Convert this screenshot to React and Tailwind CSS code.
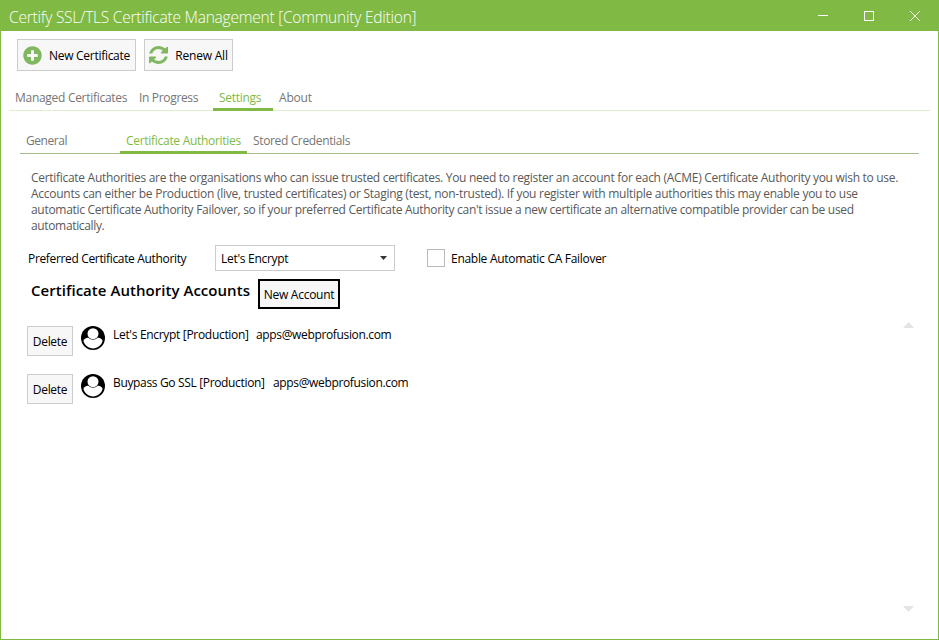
import React from "react";
import { FaPlusCircle } from "react-icons/fa";

function Btn({ className, children }) {
  return (
    <button className={"flex items-center justify-center whitespace-nowrap border border-[#cccccc] bg-[#f7f7f7] text-black " + className}>
      {children}
    </button>
  );
}

function UserIcon() {
  return (
    <svg className="ml-2 h-6 w-6 shrink-0" viewBox="0 0 24 24">
      <circle cx="12" cy="12" r="12" fill="#000" />
      <path d="M2.400 14.800C3.500 12.800 5.800 11.600 8 11.600h8c2.200 0 4.500 1.200 5.600 3.200C20.300 19.400 16.500 22.400 12 22.400S3.700 19.400 2.400 14.800z" fill="#fff" />
      <circle cx="12" cy="7.700" r="6.100" fill="#000" />
      <circle cx="12" cy="7.700" r="5.500" fill="#fff" />
    </svg>
  );
}

function Account({ name, nameClass }) {
  return (
    <div className="flex h-12 items-start pl-[26px]">
      <Btn className="h-[30px] w-[46px] pt-px tracking-[-0.3px]">Delete</Btn>
      <UserIcon />
      <span className={"mt-px ml-2 block leading-4 whitespace-nowrap " + nameClass}>{name}</span>
      <span className="mt-px block leading-4 tracking-[-0.35px] whitespace-nowrap">apps@webprofusion.com</span>
    </div>
  );
}

export default function App() {
  return (
    <div className="flex h-[640px] w-[939px] flex-col overflow-hidden border border-t-0 border-[#80ba45] bg-white font-['Open_Sans','Noto_Sans',sans-serif] text-[12px] leading-4 tracking-[-0.29px] text-black">
      <header className="flex h-[31px] shrink-0 items-center bg-[#80ba45] pl-2 text-white">
        <h1 className="w-[410px] pt-0.5 text-[15.500px] leading-5 font-light whitespace-nowrap tracking-[-0.22px]">Certify SSL/TLS Certificate Management [Community Edition]</h1>
        <svg className="ml-auto h-[31px] w-[138px]" viewBox="0 0 138 31" fill="none" stroke="#fff" shapeRendering="crispEdges">
          <path d="M18 15.500h10M64.500 11.500h9v9h-9z" />
          <path d="M110 11l10 10M120 11l-10 10" shapeRendering="auto" strokeWidth=".9" />
        </svg>
      </header>

      <div className="flex shrink-0 gap-2 pt-2 pl-4">
        <Btn className="h-8 w-[119px] gap-[7px]">
          <FaPlusCircle size={19} color="#80b760" className="shrink-0" />
          <span className="pt-0.5">New Certificate</span>
        </Btn>
        <Btn className="h-8 w-[89px] gap-[7px]">
          <svg className="h-[18px] w-[19px] shrink-0" viewBox="0 0 1536 1536" preserveAspectRatio="none" fill="#80b760">
            <path d="M1511 928q0 5-1 7-64 268-268 434.500T764 1536q-146 0-282.500-55T238 1324l-129 129q-19 19-45 19t-45-19-19-45V960q0-26 19-45t45-19h448q26 0 45 19t19 45-19 45l-137 137q71 66 161 102t187 36q134 0 250-65t186-179q11-17 53-117 8-23 30-23h192q13 0 22.500 9.500t9.500 22.500zm25-800v448q0 26-19 45t-45 19h-448q-26 0-45-19t-19-45 19-45l138-138Q969 256 768 256q-134 0-250 65T332 500q-11 17-53 117-8 23-30 23H50q-13 0-22.500-9.500T18 608v-7q65-268 270-434.500T768 0q146 0 284 55.500T1297 212l130-129q19-19 45-19t45 19 19 45z" />
          </svg>
          <span className="pt-0.5 tracking-[-0.2px]">Renew All</span>
        </Btn>
      </div>

      <nav className="mx-2 mt-[15px] flex h-[25px] shrink-0 border-b border-[#e0efcf] pt-1 leading-4 whitespace-nowrap text-[#767676]">
        <span className="w-[124px] pl-1.5">Managed Certificates</span>
        <span className="w-20 pl-1.5 tracking-[-0.33px]">In Progress</span>
        <span className="h-[21px] w-[60px] border-b-3 border-[#80ba45] pl-1.5 text-[#80ba45]">Settings</span>
        <span className="pl-1.5 tracking-[-0.2px]">About</span>
      </nav>

      <nav className="mx-[19px] mt-[18px] flex h-[25px] shrink-0 border-b border-[#a5bd8d] pt-1 leading-4 whitespace-nowrap text-[#767676]">
        <span className="w-[100px] pl-1.5 tracking-[-0.45px]">General</span>
        <span className="h-[21px] w-[127px] border-b-3 border-[#80ba45] pl-1.5 text-[#80ba45]">Certificate Authorities</span>
        <span className="pl-1.5 tracking-[-0.36px]">Stored Credentials</span>
      </nav>

      <p className="mt-4 ml-[30px] shrink-0 leading-4 whitespace-nowrap text-[#595959]">
        <span className="block w-fit tracking-[-0.295px]">Certificate Authorities are the organisations who can issue trusted certificates. You need to register an account for each (ACME) Certificate Authority you wish to use.</span>
        <span className="block w-fit tracking-[-0.27px]">Accounts can either be Production (live, trusted certificates) or Staging (test, non-trusted). If you register with multiple authorities this may enable you to use</span>
        <span className="block w-fit tracking-[-0.3px]">automatic Certificate Authority Failover, so if your preferred Certificate Authority can't issue a new certificate an alternative compatible provider can be used</span>
        <span className="block w-fit tracking-[-0.35px]">automatically.</span>
      </p>

      <div className="mt-[11px] flex h-[26px] shrink-0 items-center pl-[27px] whitespace-nowrap">
        <span className="w-[187px] pt-0.5 tracking-[-0.34px]">Preferred Certificate Authority</span>
        <div className="flex h-[26px] w-[180px] items-center justify-between border border-[#cccccc] pr-1.5 pl-[5px]">
          <span className="pt-0.5">Let's Encrypt</span>
          <svg className="h-1 w-[9px]" viewBox="0 0 9 4"><path d="M1 0h7L4.500 4z" fill="#333" /></svg>
        </div>
        <span className="mr-1.5 ml-8 h-[18px] w-[18px] border border-[#b9b9b9]" />
        <span className="pt-0.5">Enable Automatic CA Failover</span>
      </div>

      <div className="mt-2 flex h-[30px] shrink-0 pl-[30px]">
        <h2 className="w-[227px] pt-px text-[15px] leading-5 font-semibold tracking-[0.04px] whitespace-nowrap">Certificate Authority Accounts</h2>
        <button className="h-[30px] w-[82px] border-2 border-black bg-[#f7f7f7] pt-0.5 tracking-[-0.25px] whitespace-nowrap">New Account</button>
      </div>

      <div className="mt-[13px] flex min-h-0 grow justify-between">
        <div className="pt-1">
          <Account name="Let's Encrypt [Production]" nameClass="w-[143px] tracking-[-0.31px]" />
          <Account name="Buypass Go SSL [Production]" nameClass="w-[160px] tracking-[-0.34px]" />
        </div>
        <div className="mr-6 mb-[27px] flex w-[11px] flex-col justify-between">
          <svg className="h-1.5 w-[11px]" viewBox="0 0 11 6"><path d="M0 6L5.500 0 11 6z" fill="#e4e4e4" /></svg>
          <svg className="h-1.5 w-[11px]" viewBox="0 0 11 6"><path d="M0 0h11L5.500 6z" fill="#e4e4e4" /></svg>
        </div>
      </div>
    </div>
  );
}
